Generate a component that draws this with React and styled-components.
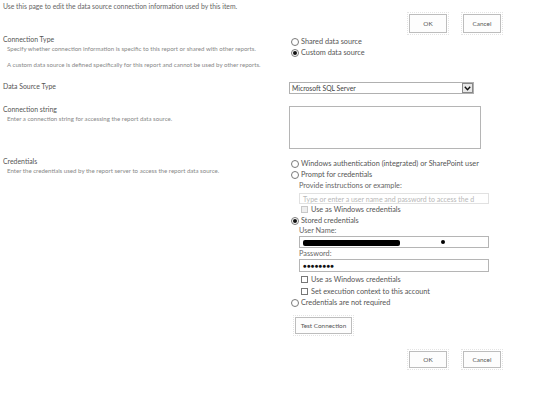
import styled, { createGlobalStyle } from "styled-components"

const Global = createGlobalStyle`
  body {
    margin: 0;
    background: #fff;
    font-family: "Lato", "Liberation Sans", sans-serif;
    color: #555;
  }
`

const Page = styled.div`
  width: 553px;
  height: 394px;
  position: relative;
  overflow: hidden;
`

const Intro = styled.div`
  padding: 2px 0 0 3px;
  height: 10px;
  line-height: 8px;
  font-size: 6.8px;
  color: #666;
`

const ButtonBar = styled.div`
  display: flex;
  justify-content: flex-end;
  gap: 16px;
  width: 501px;
  margin-top: ${(p) => p.$top}px;
`

const Button = styled.button`
  width: ${(p) => p.$w || 38}px;
  height: ${(p) => p.$h || 19}px;
  padding: 0;
  border: 1px solid #bdbdbd;
  outline: 1px dotted #e4e4e4;
  outline-offset: 1px;
  background: #fdfdfd;
  font-family: "Lato", "Liberation Sans", sans-serif;
  font-size: 6.4px;
  color: #555;
`

const Section = styled.div`
  display: grid;
  grid-template-columns: 289px 1fr;
  margin-top: ${(p) => p.$top}px;
`

const Info = styled.div`
  padding-left: 3px;
`

const Label = styled.div`
  height: 10px;
  line-height: 10px;
  font-size: 6.9px;
  color: #555;
`

const Desc = styled.div`
  height: 9px;
  line-height: 9px;
  padding-left: 4px;
  margin-top: ${(p) => p.$top || 0}px;
  font-size: 6.1px;
  color: #888;
  white-space: nowrap;
`

const Control = styled.div`
  display: flex;
  flex-direction: column;
  padding-top: ${(p) => p.$pad || 0}px;
`

const Row = styled.div`
  display: flex;
  align-items: center;
  gap: 2px;
  height: ${(p) => p.$h || 11}px;
  margin-top: ${(p) => p.$top || 0}px;
  padding-left: ${(p) => p.$indent || 2}px;
  font-size: 7.3px;
  color: #555;
  white-space: nowrap;
`

const Radio = styled.span`
  box-sizing: border-box;
  width: 8px;
  height: 8px;
  border-radius: 50%;
  border: 1px solid #7a7a7a;
  background: #fff;
  display: flex;
  align-items: center;
  justify-content: center;
  &::after {
    content: "";
    width: 4px;
    height: 4px;
    border-radius: 50%;
    background: ${(p) => (p.$on ? "#111" : "transparent")};
  }
`

const Check = styled.span`
  box-sizing: border-box;
  width: 7px;
  height: 7px;
  margin-right: 1px;
  border: 1px solid ${(p) => (p.$off ? "#c8c8c8" : "#777")};
  background: ${(p) => (p.$off ? "#eee" : "#fff")};
`

const Sub = styled.div`
  display: flex;
  flex-direction: column;
  padding-left: 10px;
`

const FieldLabel = styled.div`
  height: ${(p) => p.$h || 11}px;
  line-height: ${(p) => p.$h || 11}px;
  font-size: 7.3px;
  color: #666;
`

const Input = styled.div`
  box-sizing: border-box;
  width: 190px;
  height: ${(p) => p.$h || 12}px;
  margin-top: ${(p) => p.$top || 0}px;
  border: 1px solid ${(p) => (p.$muted ? "#e1e1e1" : "#b5b5b5")};
  display: flex;
  align-items: center;
  padding-left: 3px;
  font-size: 7px;
  color: ${(p) => (p.$muted ? "#b8b8b8" : "#222")};
  white-space: nowrap;
  overflow: hidden;
`

const Select = styled.div`
  box-sizing: border-box;
  width: 185px;
  height: 12px;
  margin-top: 1px;
  border: 1px solid #b0b0b0;
  display: flex;
  align-items: center;
  justify-content: space-between;
  padding-left: 2px;
  font-size: 6.8px;
  color: #444;
`

const Arrow = styled.span`
  box-sizing: border-box;
  width: 11px;
  height: 10px;
  border: 1px solid #888;
  background: #e8e8e8;
  display: flex;
  align-items: center;
  justify-content: center;
`

const TextArea = styled.div`
  box-sizing: border-box;
  width: 192px;
  height: 43px;
  margin-top: 2px;
  border: 1px solid #b5b5b5;
`

const Redacted = styled.span`
  width: 97px;
  height: 6px;
  margin-top: 1px;
  background: #000;
  border-radius: 2px;
`

const Dot = styled.span`
  width: 4px;
  height: 4px;
  margin-left: 41px;
  border-radius: 50%;
  background: #000;
`

const Mask = styled.span`
  font-size: 6px;
  letter-spacing: 0.3px;
  color: #111;
`

const TestRow = styled.div`
  display: flex;
  margin-top: 9px;
  padding-left: 6px;
`

const App = () => (
  <Page>
    <Global />
    <Intro>Use this page to edit the data source connection information used by this item.</Intro>
    <ButtonBar $top={2}>
      <Button>OK</Button>
      <Button>Cancel</Button>
    </ButtonBar>

    <Section $top={1}>
      <Info>
        <Label>Connection Type</Label>
        <Desc>Specify whether connection information is specific to this report or shared with other reports.</Desc>
        <Desc $top={7}>A custom data source is defined specifically for this report and cannot be used by other reports.</Desc>
      </Info>
      <Control $pad={2}>
        <Row><Radio />Shared data source</Row>
        <Row><Radio $on />Custom data source</Row>
      </Control>
    </Section>

    <Section $top={12}>
      <Info>
        <Label>Data Source Type</Label>
      </Info>
      <Control>
        <Select>
          Microsoft SQL Server
          <Arrow>
            <svg width="7" height="5" viewBox="0 0 7 5">
              <path d="M0.8 0.8 L3.5 3.8 L6.2 0.8" fill="none" stroke="#111" strokeWidth="1.4" />
            </svg>
          </Arrow>
        </Select>
      </Control>
    </Section>

    <Section $top={10}>
      <Info>
        <Label>Connection string</Label>
        <Desc>Enter a connection string for accessing the report data source.</Desc>
      </Info>
      <Control>
        <TextArea />
      </Control>
    </Section>

    <Section $top={7}>
      <Info>
        <Label>Credentials</Label>
        <Desc>Enter the credentials used by the report server to access the report data source.</Desc>
      </Info>
      <Control $pad={2}>
        <Row><Radio />Windows authentication (integrated) or SharePoint user</Row>
        <Row><Radio />Prompt for credentials</Row>
        <Sub>
          <FieldLabel>Provide instructions or example:</FieldLabel>
          <Input $muted $h={11} $top={2}>Type or enter a user name and password to access the d</Input>
          <Row $indent={2}><Check $off />Use as Windows credentials</Row>
        </Sub>
        <Row><Radio $on />Stored credentials</Row>
        <Sub>
          <FieldLabel $h={10}>User Name:</FieldLabel>
          <Input $h={12}>
            <Redacted />
            <Dot />
          </Input>
          <FieldLabel>Password:</FieldLabel>
          <Input $h={13}>
            <Mask>●●●●●●●●</Mask>
          </Input>
          <Row $h={12} $top={1}><Check />Use as Windows credentials</Row>
          <Row $h={12}><Check />Set execution context to this account</Row>
        </Sub>
        <Row><Radio />Credentials are not required</Row>
        <TestRow>
          <Button $w={57} $h={17}>Test Connection</Button>
        </TestRow>
      </Control>
    </Section>

    <ButtonBar $top={17}>
      <Button $h={17}>OK</Button>
      <Button $h={17}>Cancel</Button>
    </ButtonBar>
  </Page>
)

export default App
